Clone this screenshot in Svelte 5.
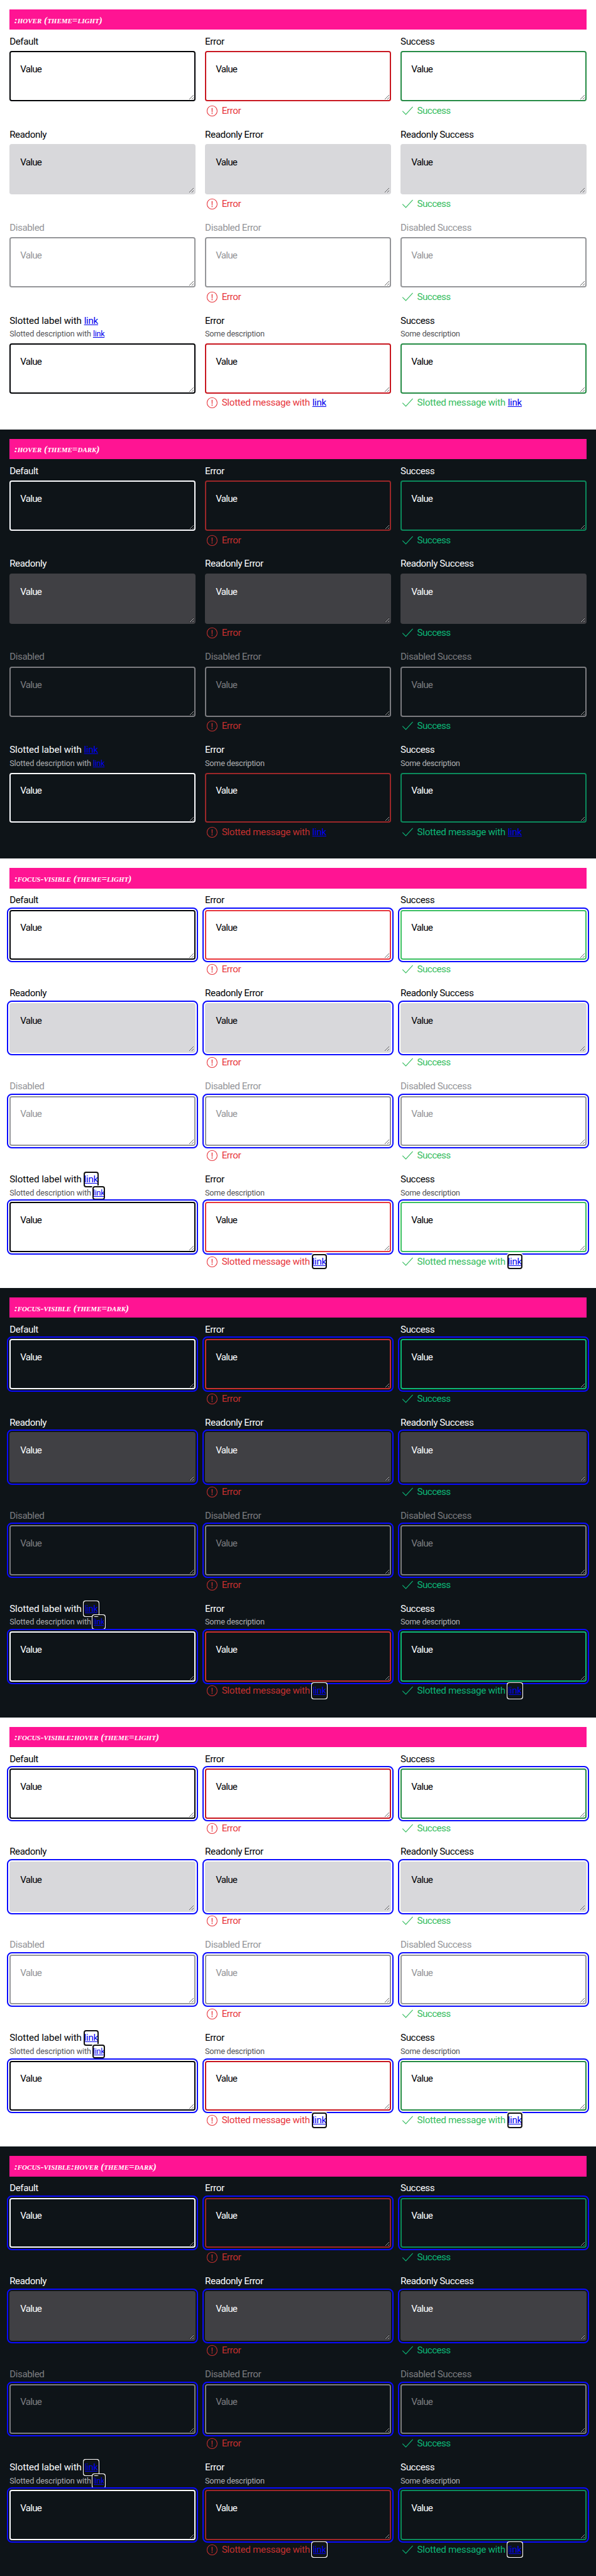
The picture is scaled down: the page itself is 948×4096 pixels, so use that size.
<script>
  const states = [':hover', ':focus-visible', ':focus-visible:hover'];
  const sections = states.flatMap((state) => ['light', 'dark'].map((theme) => ({ state, theme })));

  const rows = [
    { kind: 'default', labels: ['Default', 'Error', 'Success'] },
    { kind: 'readonly', labels: ['Readonly', 'Readonly Error', 'Readonly Success'] },
    { kind: 'disabled', labels: ['Disabled', 'Disabled Error', 'Disabled Success'] },
    { kind: 'slotted', labels: ['Slotted label with', 'Error', 'Success'] }
  ];
  const results = ['none', 'error', 'success'];
  const messages = { error: 'Error', success: 'Success' };
</script>

{#each sections as { state, theme }}
  <section class={theme} class:focus={state.includes('focus')} class:hover={state.includes('hover')}>
    <h2>{state} (theme={theme})</h2>
    {#each rows as row}
      <div class="row {row.kind}">
        {#each results as result, i}
          <div class="field {result}">
            {#if row.kind === 'slotted' && i === 0}
              <div class="label"><span class="lead">{row.labels[i]}</span><span class="link">link</span></div>
              <div class="description"><span class="lead">Slotted description with</span><span class="link">link</span></div>
            {:else}
              <div class="label">{row.labels[i]}</div>
              {#if row.kind === 'slotted'}<div class="description">Some description</div>{/if}
            {/if}
            <textarea readonly tabindex="-1" value="Value"></textarea>
            {#if i > 0}
              <div class="message">
                <svg viewBox="0 0 24 24" aria-hidden="true">
                  {#if result === 'error'}
                    <circle cx="12" cy="12" r="8.5" fill="none" stroke="currentColor" stroke-width="1.1" />
                    <path d="M11.2 7h1.6l-.25 7.2h-1.1zM11.2 15.3h1.6v1.8h-1.6z" fill="currentColor" />
                  {:else}
                    <path d="M3.4 12.2 9 17.8 20.6 5.2" fill="none" stroke="currentColor" stroke-width="1.15" />
                  {/if}
                </svg>
                {#if row.kind === 'slotted'}
                  <span class="lead">Slotted message with</span><span class="link">link</span>
                {:else}
                  <span class={result}>{messages[result]}</span>
                {/if}
              </div>
            {/if}
          </div>
        {/each}
      </div>
    {/each}
  </section>
{/each}

<style>
  :global(html) {
    font-size: 9.48px;
  }
  :global(body) {
    margin: 0;
  }
  section {
    --text: #010205;
    --muted: #535457;
    --off: #949598;
    --fill: #d8d8db;
    --bad: #e7353c;
    --bad-line: #e7353c;
    --good: #35bd5e;
    --good-line: #3bbf62;
    box-sizing: border-box;
    height: calc(4096px / 6);
    padding: 1.6rem;
    background: #fff;
    color: var(--text);
    font-family: Roboto, sans-serif;
    font-size: 1.6rem;
    line-height: 2.5rem;
    letter-spacing: -0.042rem;
    overflow: hidden;
  }
  section.hover {
    --bad-line: #c8161f;
    --good-line: #258b45;
  }
  section.dark {
    --text: #fbfcff;
    --muted: #afb0b3;
    --off: #7c7c80;
    --fill: #404044;
    --bad: #c4302f;
    --bad-line: #c93030;
    --good: #0cb777;
    --good-line: #0cb777;
    background: #0e1418;
  }
  section.dark.hover {
    --bad-line: #9c2729;
    --good-line: #0b8a5c;
  }
  h2 {
    box-sizing: border-box;
    height: 3.4rem;
    margin: 0 0 0.8rem;
    padding: 0.8rem;
    background: #ff1493;
    color: #fff;
    font: italic small-caps 700 1.6rem/1.8rem 'Liberation Serif', serif;
    letter-spacing: 0;
  }
  .row {
    display: grid;
    grid-template-columns: repeat(3, 1fr);
    gap: 1.6rem;
    align-items: start;
    height: 15.6rem;
  }
  .field {
    display: flex;
    flex-direction: column;
  }
  .label,
  .description {
    display: flex;
    height: 2.4rem;
    white-space: nowrap;
  }
  .description {
    height: 2.2rem;
    color: var(--muted);
    font-size: 1.333rem;
    line-height: 2.1rem;
    letter-spacing: -0.025rem;
  }
  .label .lead {
    width: 12.5rem;
    letter-spacing: -0.007rem;
  }
  .description .lead {
    width: 14rem;
    letter-spacing: -0.012rem;
  }
  .message .lead {
    width: 15.2rem;
    letter-spacing: -0.028rem;
  }
  .link {
    color: #0000ee;
    letter-spacing: -0.03rem;
    text-decoration: underline;
  }
  .description .link {
    height: 2.1rem;
  }
  .focus .link {
    outline: 1px auto #101010;
  }
  textarea {
    display: block;
    box-sizing: border-box;
    width: 100%;
    height: 8.4rem;
    margin: 0.4rem 0 0;
    padding: 1.65rem 1.6rem 0;
    border: 2px solid var(--text);
    border-radius: 0.4rem;
    background: transparent;
    color: var(--text);
    font: inherit;
    line-height: 2.4rem;
    letter-spacing: -0.08rem;
    overflow: hidden;
    resize: both;
  }
  .error textarea {
    border-color: var(--bad-line);
  }
  .success textarea {
    border-color: var(--good-line);
  }
  .readonly textarea {
    border-color: var(--fill);
    background: var(--fill);
  }
  .disabled textarea {
    border-color: var(--off);
    color: var(--off);
  }
  .disabled .label {
    color: var(--off);
  }
  .focus textarea {
    outline: 2px solid #0a0aff;
    outline-offset: 2px;
  }
  .message {
    display: flex;
    height: 2.4rem;
    margin-top: 0.4rem;
    white-space: nowrap;
  }
  .error .message {
    color: var(--bad);
  }
  .success .message {
    color: var(--good);
  }
  .message .success {
    letter-spacing: -0.06rem;
  }
  .message svg {
    width: 2.4rem;
    height: 2.4rem;
    margin-right: 0.4rem;
    flex: none;
  }
</style>
